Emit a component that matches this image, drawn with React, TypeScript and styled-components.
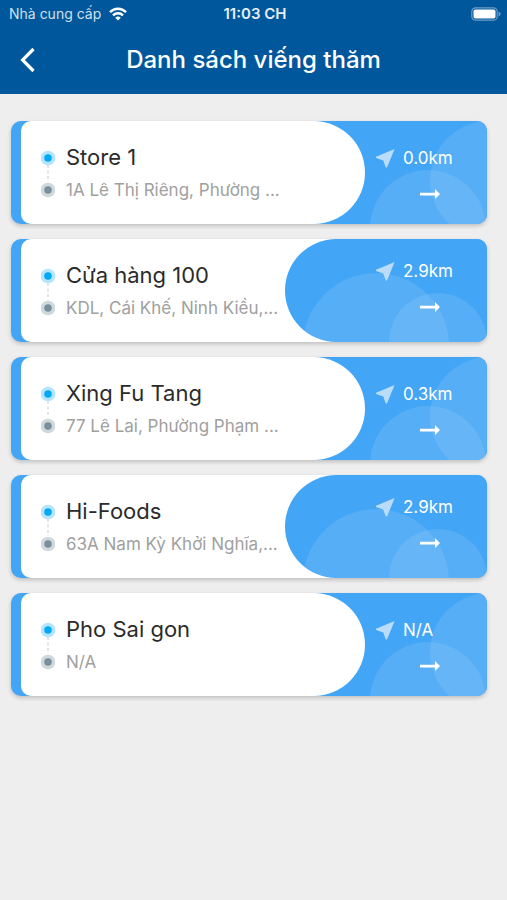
import React from "react";
import styled, { createGlobalStyle } from "styled-components";

const GlobalStyle = createGlobalStyle`
  * { box-sizing: border-box; }
  body {
    margin: 0;
    min-height: 100vh;
    background: #eeeeee;
    font-family: Inter, "Noto Sans", sans-serif;
  }
`;

const Header = styled.header`
  background: #01579b;
  color: #ffffff;
  padding-bottom: 2px;
`;

const StatusBar = styled.div`
  display: grid;
  grid-template-columns: 1fr auto 1fr;
  align-items: center;
  height: 28px;
  padding: 0 6px 0 9px;
  font-size: 14px;
  line-height: 20px;
`;

const Carrier = styled.span`
  display: flex;
  align-items: center;
  gap: 8px;
  color: #cfe0ee;
`;

const Clock = styled.time`
  font-size: 15px;
  font-weight: 600;
  color: #e4eef6;
`;

const BatterySlot = styled.span`
  display: flex;
  justify-content: flex-end;
`;

const TitleBar = styled.div`
  display: grid;
  grid-template-columns: 56px 1fr 56px;
  align-items: center;
  height: 64px;
`;

const BackButton = styled.button`
  display: grid;
  place-items: center;
  height: 48px;
  padding: 0;
  border: 0;
  background: none;
  color: inherit;
  cursor: pointer;
`;

const Title = styled.h1`
  margin: 0;
  font-size: 24px;
  line-height: 32px;
  font-weight: 500;
  text-align: center;
  white-space: nowrap;
`;

const List = styled.ul`
  display: grid;
  gap: 15px;
  margin: 0;
  padding: 27px 20px 27px 11px;
  list-style: none;
`;

const Card = styled.a`
  display: flex;
  min-height: 103px;
  padding-left: 10px;
  border-radius: 10px;
  overflow: hidden;
  background: #42a5f5;
  box-shadow: 0 2px 4px rgba(0, 0, 0, 0.2);
  color: inherit;
  text-decoration: none;
`;

const Info = styled.div<{ $far: boolean }>`
  flex: 1;
  min-width: 0;
  display: grid;
  grid-template-columns: 14px 1fr;
  column-gap: 11px;
  align-content: center;
  padding: 2px ${(p) => (p.$far ? 60 : 80)}px 0 20px;
  border-radius: ${(p) => (p.$far ? "10px 0 0 10px" : "10px 52px 52px 10px")};
  background: #ffffff;
`;

const Texts = styled.div`
  min-width: 0;
`;

const Name = styled.h2`
  margin: 0;
  font-size: 22px;
  line-height: 32px;
  font-weight: 400;
  color: #2b2b2b;
  white-space: nowrap;
`;

const Address = styled.p`
  margin: 0;
  font-size: 17px;
  line-height: 34px;
  color: #a0a0a0;
  white-space: nowrap;
`;

const Distance = styled.div<{ $far: boolean }>`
  position: relative;
  flex: none;
  width: ${(p) => (p.$far ? 202 : 122)}px;
  margin-left: ${(p) => (p.$far ? -50 : 0)}px;
  display: flex;
  flex-direction: column;
  align-items: flex-end;
  padding-top: ${(p) => (p.$far ? 20 : 25)}px;
  border-radius: ${(p) => (p.$far ? "52px 0 0 52px" : "0")};
  overflow: hidden;
  background: #42a5f5;
  color: #ffffff;
`;

const Circles = styled.svg`
  position: absolute;
  right: 0;
  bottom: 0;
`;

const Measure = styled.span`
  position: relative;
  display: flex;
  align-items: center;
  gap: 8px;
  width: 111px;
  font-size: 17px;
  line-height: 24px;
`;

const ArrowSlot = styled.span`
  position: relative;
  display: flex;
  width: 111px;
  padding: 18px 0 0 44px;
`;

const WifiIcon = () => (
  <svg width="18" height="14" viewBox="0 0 18 14" fill="none" stroke="#fff" strokeWidth="2.4" aria-hidden="true">
    <path d="M1 5.2C5.5 .6 12.5 .6 17 5.2" />
    <path d="M4 8.4C6.8 5.6 11.2 5.6 14 8.4" />
    <path d="M9 13.6L6.2 10.7Q9 8.5 11.8 10.7Z" fill="#fff" stroke="none" />
  </svg>
);

const BatteryIcon = () => (
  <svg width="30" height="14" viewBox="0 0 30 14" aria-hidden="true">
    <rect x="0.8" y="0.8" width="25.4" height="12.4" rx="3.8" fill="none" stroke="#6f9fc8" strokeWidth="1.2" />
    <rect x="2.5" y="2.5" width="22" height="9" rx="1.8" fill="#fff" />
    <path d="M27.6 4.6Q29.6 5.4 29.6 7Q29.6 8.6 27.6 9.4Z" fill="#6f9fc8" />
  </svg>
);

const BackIcon = () => (
  <svg width="16" height="26" viewBox="0 0 16 26" fill="none" stroke="currentColor" strokeWidth="3.2" aria-hidden="true">
    <path d="M13.5 2L2.6 13L13.5 24" />
  </svg>
);

const RouteIcon = () => (
  <svg width="14" height="66" viewBox="0 0 14 66" aria-hidden="true">
    <path d="M7 24V41" stroke="#cfd4d8" strokeWidth="1.2" strokeDasharray="3 2.5" />
    <circle cx="7" cy="17" r="7.3" fill="#b3e5fc" />
    <circle cx="7" cy="17" r="3.8" fill="#03a9f4" />
    <circle cx="7" cy="49" r="7.3" fill="#cfd8dc" />
    <circle cx="7" cy="49" r="3.8" fill="#78909c" />
  </svg>
);

const NearMeIcon = () => (
  <svg width="19" height="19" viewBox="0 0 19 19" aria-hidden="true">
    <path d="M18.600 0L0 7.800V9L7.200 11.600L9.800 18.600H11Z" fill="#b9dcfb" />
  </svg>
);

const ArrowIcon = () => (
  <svg width="20" height="12" viewBox="0 0 20 12" fill="#fff" aria-hidden="true">
    <path d="M0 4.700H15V1L20 6L15 11V7.500H0Z" />
  </svg>
);

const NearCircles = () => (
  <Circles width="122" height="103" viewBox="0 0 122 103" fill="#fff" fillOpacity="0.1" aria-hidden="true">
    <circle cx="63" cy="107" r="58" />
    <circle cx="124" cy="59" r="59" />
  </Circles>
);

const FarCircles = () => (
  <Circles width="202" height="103" viewBox="0 0 202 103" fill="#fff" fillOpacity="0.1" aria-hidden="true">
    <circle cx="91" cy="107" r="73" />
    <circle cx="153" cy="103" r="49" />
  </Circles>
);

type Visit = { name: string; address: string; distance: string; far: boolean };

const visits: Visit[] = [
  { name: "Store 1", address: "1A Lê Thị Riêng, Phường ...", distance: "0.0km", far: false },
  { name: "Cửa hàng 100", address: "KDL, Cái Khế, Ninh Kiều,...", distance: "2.9km", far: true },
  { name: "Xing Fu Tang", address: "77 Lê Lai, Phường Phạm ...", distance: "0.3km", far: false },
  { name: "Hi-Foods", address: "63A Nam Kỳ Khởi Nghĩa,...", distance: "2.9km", far: true },
  { name: "Pho Sai gon", address: "N/A", distance: "N/A", far: false },
];

const VisitCard = ({ name, address, distance, far }: Visit) => (
  <li>
    <Card href="#">
      <Info $far={far}>
        <RouteIcon />
        <Texts>
          <Name>{name}</Name>
          <Address>{address}</Address>
        </Texts>
      </Info>
      <Distance $far={far}>
        {far ? <FarCircles /> : <NearCircles />}
        <Measure>
          <NearMeIcon />
          {distance}
        </Measure>
        <ArrowSlot>
          <ArrowIcon />
        </ArrowSlot>
      </Distance>
    </Card>
  </li>
);

export default function App() {
  return (
    <>
      <GlobalStyle />
      <Header>
        <StatusBar>
          <Carrier>
            Nhà cung cấp
            <WifiIcon />
          </Carrier>
          <Clock>11:03 CH</Clock>
          <BatterySlot>
            <BatteryIcon />
          </BatterySlot>
        </StatusBar>
        <TitleBar>
          <BackButton type="button" aria-label="Quay lại">
            <BackIcon />
          </BackButton>
          <Title>Danh sách viếng thăm</Title>
        </TitleBar>
      </Header>
      <main>
        <List>
          {visits.map((visit) => (
            <VisitCard key={visit.name} {...visit} />
          ))}
        </List>
      </main>
    </>
  );
}
